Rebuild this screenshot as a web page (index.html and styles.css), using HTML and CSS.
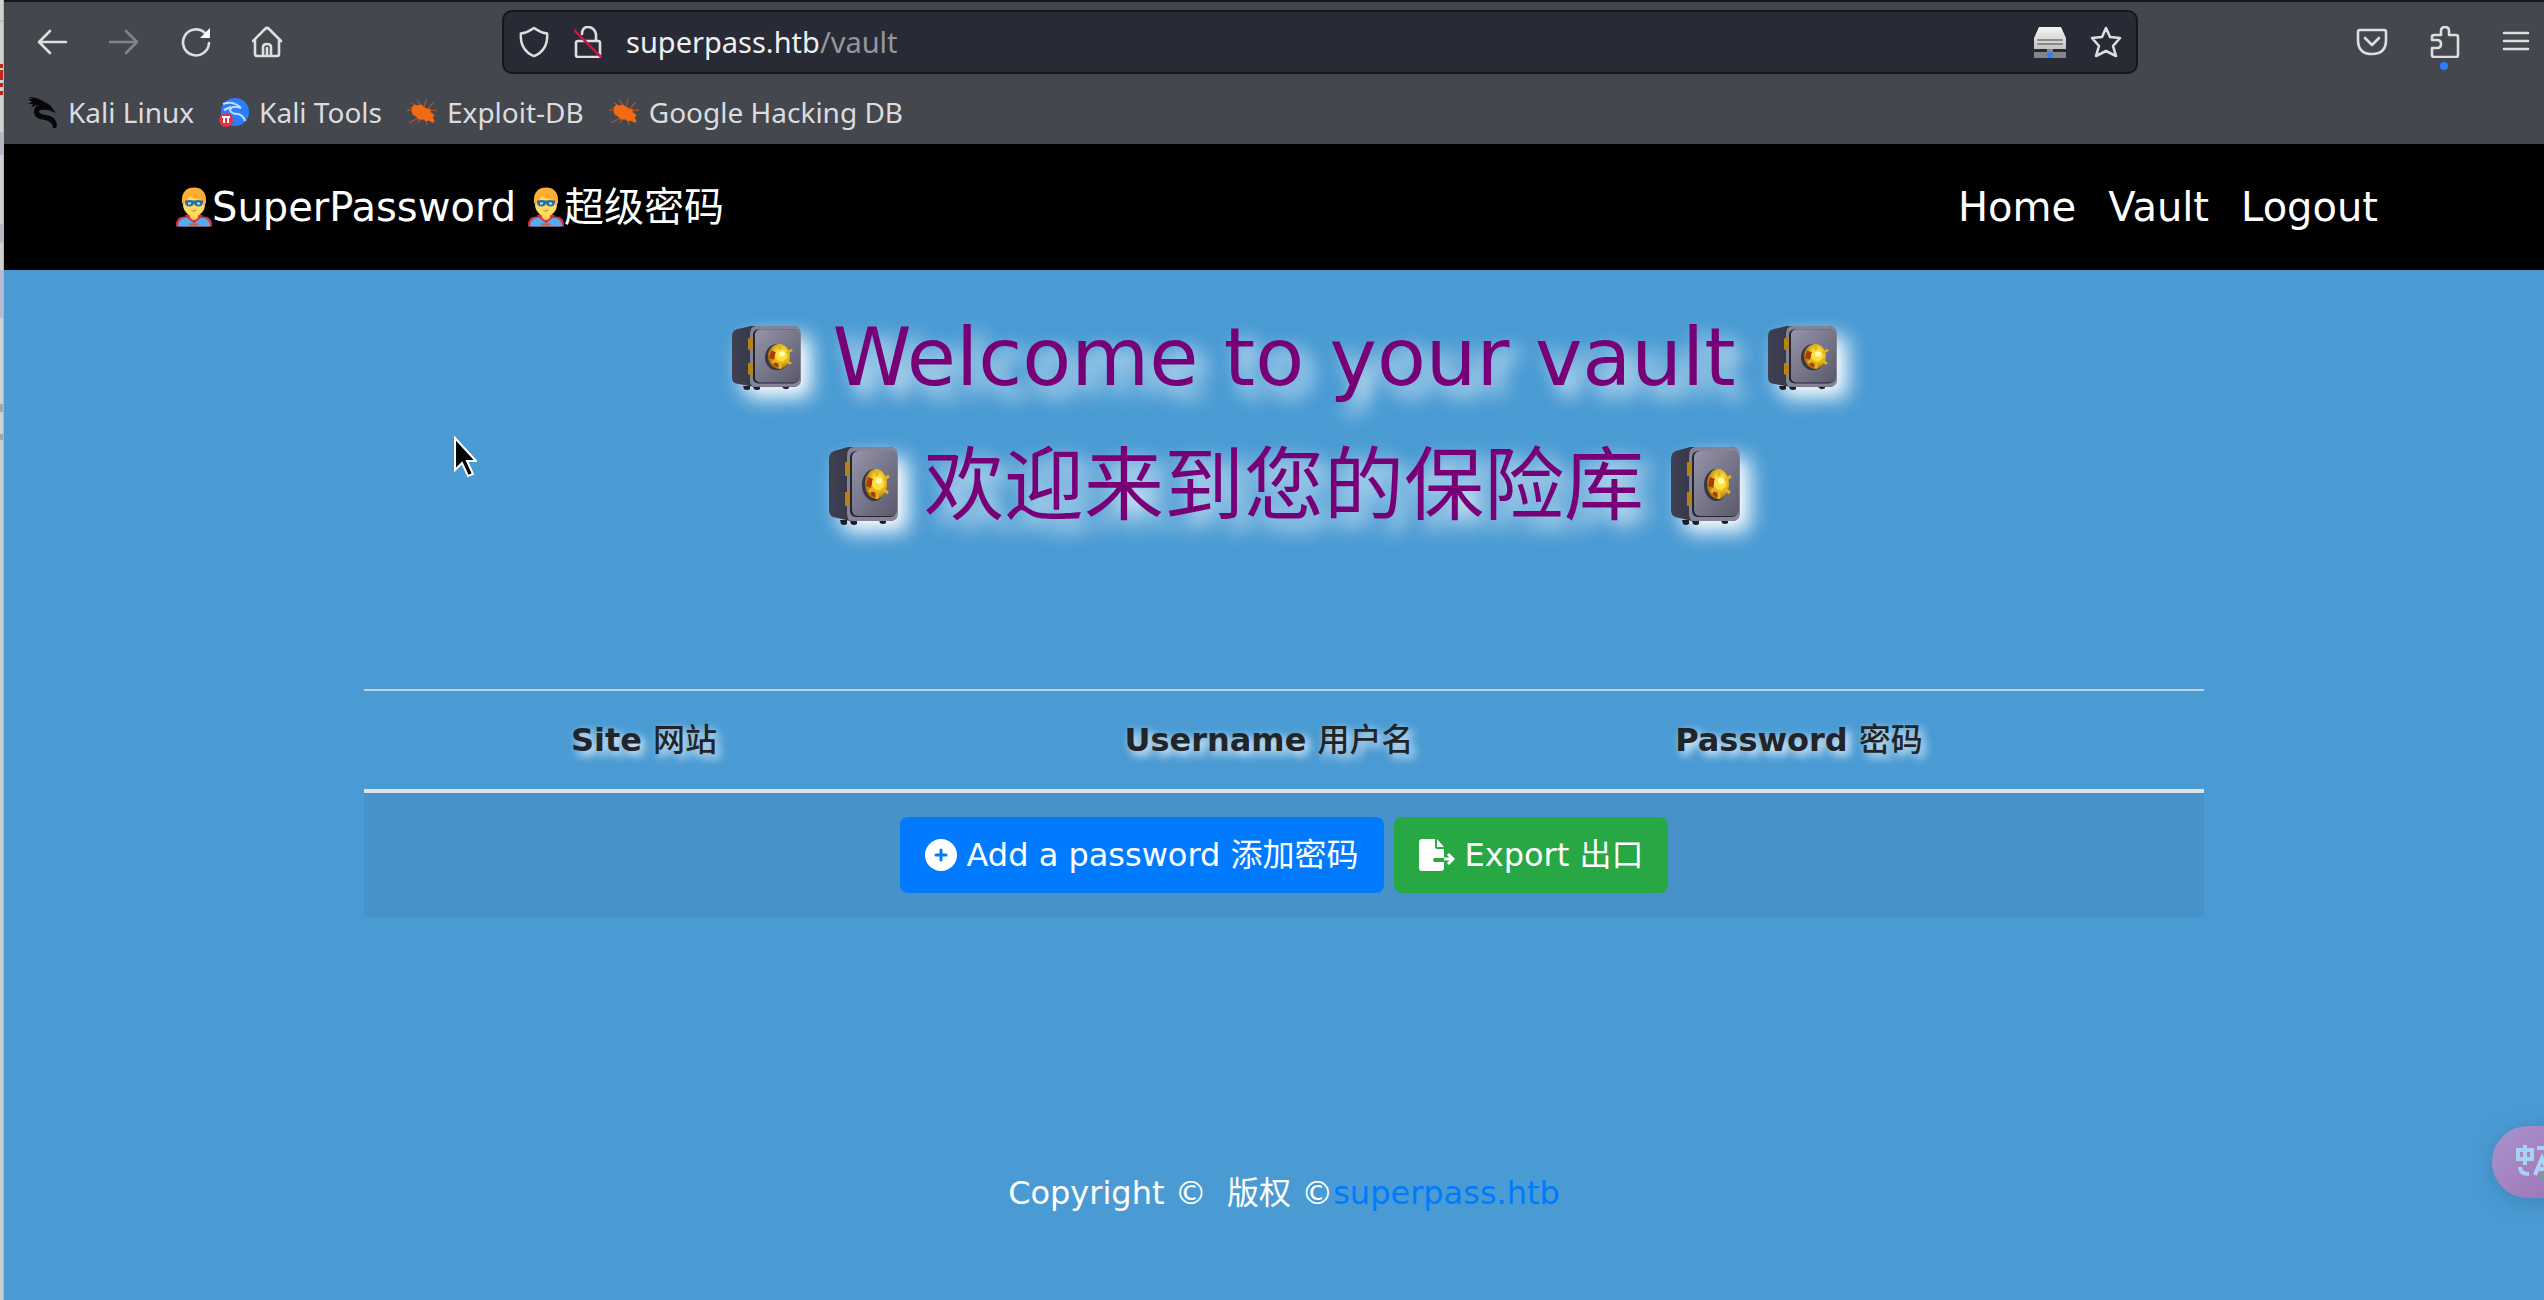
FILE: index.html
```html
<!DOCTYPE html>
<html lang="en">
<head>
<meta charset="utf-8">
<title>SuperPassword</title>
<link rel="stylesheet" href="styles.css">
</head>
<body>
<svg class="defs" aria-hidden="true">
  <defs>
    <linearGradient id="door" x1="0" y1="0" x2="1" y2="1">
      <stop offset="0" stop-color="#9594a8"/><stop offset="1" stop-color="#5a596c"/>
    </linearGradient>
    <linearGradient id="side" x1="0" y1="0" x2="1" y2="0">
      <stop offset="0" stop-color="#3f4052"/><stop offset="1" stop-color="#24242f"/>
    </linearGradient>
    <radialGradient id="gold" cx=".6" cy=".4" r=".6">
      <stop offset="0" stop-color="#fff27a"/><stop offset=".5" stop-color="#f0c52c"/><stop offset="1" stop-color="#a97405"/>
    </radialGradient>
    <linearGradient id="disk" x1="0" y1="0" x2="0" y2="1">
      <stop offset="0" stop-color="#f4f4f4"/><stop offset="1" stop-color="#c4c4c4"/>
    </linearGradient>
    <symbol id="safe" viewBox="0 0 70 78" preserveAspectRatio="none">
      <path d="M12 73h7v4q-3 2-6 0zM22 74h7v3q-3 2-6 0zM51 73h7v3q-3 2-6 0z" fill="#1e1e2a"/>
      <path d="M1 12Q1 6 6 4L20 0h42q7 1 7 8v58q0 8-7 8H22L5 70q-4-2-4-7z" fill="url(#side)"/>
      <path d="M25 0h37q8 1 8 9v57q0 8-8 8H23q-4-1-4-8V9q0-8 6-9z" fill="#858496"/>
      <rect x="22" y="4" width="46" height="66" rx="6" fill="#252530"/>
      <rect x="24" y="4" width="45" height="65" rx="6" fill="url(#door)"/>
      <path d="M17 15h5v14h-5zM17 45h5v14h-5z" fill="#b38316"/>
      <ellipse cx="46" cy="38" rx="12" ry="16" fill="#393545"/>
      <ellipse cx="48" cy="37" rx="11" ry="15" fill="url(#gold)"/>
      <path d="M40 30l5 2-2 9-5-2zM42 44l6 2 1 5-5-2z" fill="#a93c08"/>
      <path d="M49 22v30M51 36l10-7M52 40l8 6M47 40l-6 5" stroke="#e3b420" stroke-width="3"/>
      <ellipse cx="50" cy="36" rx="6" ry="7" fill="#ffe03c"/>
      <circle cx="51" cy="34" r="3" fill="#fffab5"/>
    </symbol>
    <symbol id="hero" viewBox="0 0 36 39">
      <path d="M0 38q0-9 8-9h20q8 0 8 9v1H0z" fill="#dd2e44"/>
      <path d="M2 39q0-8 8-9l8 4 8-4q8 1 8 9z" fill="#55acee"/>
      <path d="M9 28l9 8 9-8-5-2h-8z" fill="#dd2e44"/>
      <path d="M14 25h8v5q-4 5-8 0z" fill="#ffcc4d"/>
      <path d="M18 5c8 0 11 5 11 12 0 6-5 12-11 12S7 23 7 17C7 10 10 5 18 5z" fill="#ffdc5d"/>
      <path d="M6 15C5 4 11 0 18 0s13 4 12 15l-2 4q0-5-3-7-10-1-11-4-2 5-5 5-1 2-1 6z" fill="#ffac33"/>
      <path d="M9 13q5-1 9 0 4-1 9 0 1 6-5 6-3 0-4-3-1 3-4 3-6 0-5-6z" fill="#2b6f9e"/>
      <path d="M12 15h3v2h-3zM21 15h3v2h-3z" fill="#bbddf5"/>
      <path d="M15 23h6q-3 2-6 0zM13 36h10v2H13z" fill="#c1694f"/>
    </symbol>
    <symbol id="bug" viewBox="0 0 30 26">
      <path d="M5 4l7 5M10 1l5 7M19 1l-2 7M26 4l-6 6M29 11l-8 1M1 11l7 1M3 23l8-4M11 23l4-5M20 25l-2-7" stroke="#b9562a" stroke-width="1"/>
      <path d="M5 9l3-3 2 1 4-1 3 2 3 2 3 0 0 3 4 3-2 2 2 4-2 1-4-2-2 1-3-2-4 0-3-3-3-2z" fill="#f26a14"/>
    </symbol>
  </defs>
</svg>

<div class="behind" aria-hidden="true"></div>

<div class="window">
  <header class="chrome">
    <div class="toolbar">
      <div class="history">
        <button aria-label="Back"><svg class="ico" viewBox="0 0 32 32"><path d="M30 16H3M14 5L3 16l11 11"/></svg></button>
        <button aria-label="Forward" class="off"><svg class="ico" viewBox="0 0 32 32"><path d="M2 16h27M18 5l11 11-11 11"/></svg></button>
        <button aria-label="Reload"><svg class="ico" viewBox="0 0 32 32"><path d="M29 17a13 13 0 1 1-4-10"/><path d="M30 2v10H20z" fill="#fbfbfe" stroke="none"/></svg></button>
        <button aria-label="Home"><svg class="ico" viewBox="0 0 32 32"><path d="M1 15L13 3q2-2 4 0l12 12M3 13v15q0 2 2 2h20q2 0 2-2V13M11 30V21q0-3 4-3t4 3v9M15 22v8"/></svg></button>
      </div>
      <div class="url">
        <svg class="ico" viewBox="0 0 32 34"><path d="M16 2q7 5 14 6 1 18-14 24Q1 26 2 8q7-1 14-6z"/></svg>
        <svg class="ico lock" viewBox="2 1 28 32"><path d="M10 9q0-7 6-7t8 7v7M4 18q0-2 2-2h20q2 0 2 2v12q0 2-2 2H6q-2 0-2-2z"/><path d="M2 5l28 28" stroke="#d70f42"/></svg>
        <a class="address" href="#">superpass.htb<span>/vault</span></a>
        <svg class="ico" viewBox="0 0 32 32"><path d="M5 1h22l5 11v11H0V12z" fill="url(#disk)" stroke="none"/><path d="M4 14h24M4 18h24" stroke="#8b8b8b" stroke-width="2"/><path d="M0 26h32v6H0zM13 23h6v4h-6z" fill="#858585" stroke="none"/><circle cx="16" cy="29" r="3" fill="#2d7df6" stroke="none"/></svg>
        <svg class="ico" viewBox="0 0 32 32"><path d="M16 2l4 9 10 1-7 8 3 10-10-5-10 5 3-10-7-8 10-1z"/></svg>
      </div>
      <div class="tools">
        <button aria-label="Pocket"><svg class="ico" viewBox="0 0 32 32"><path d="M4 4h24q2 0 2 2v8q0 14-14 14T2 14V6q0-2 2-2zM9 12l7 7 7-7"/></svg></button>
        <button aria-label="Extensions" class="badge"><svg class="ico" viewBox="0 0 32 32"><path d="M6 31q-2 0-2-2v-7h5q4 0 4-4t-4-4H4v-3q0-2 2-2h7V5q0-4 4-4t4 4v4h7q2 0 2 2v18q0 2-2 2z"/></svg></button>
        <button aria-label="Menu"><svg class="ico" viewBox="0 0 32 32"><path d="M4 7h24M4 15h24M4 23h24"/></svg></button>
      </div>
    </div>
    <nav class="bookmarks">
      <a href="#"><svg viewBox="0 0 32 32"><path d="M1 1q8 0 13 3l9 5 6 8-8-3q-8-1-9 1 0 3 7 4 10 1 11 10l-1 3-3 0q0-6-8-8-10-1-11-7-1-5 4-8-4 0-7 3l2-4-5 0 4-2-4-3 5 0z" fill="#08080a"/></svg>Kali Linux</a>
      <a href="#"><svg viewBox="0 0 32 32"><circle cx="17" cy="16" r="14" fill="#2a7dff"/><path d="M5 8q10-4 18 4-10-3-11 2 1 4 8 4 6 2 7 7M6 14l7-3" fill="none" stroke="#c3dcff" stroke-width="2"/><circle cx="8" cy="24" r="7" fill="#e9303f"/><path d="M4 21h8M6 21v6M10 21v6" stroke="#fff" stroke-width="2"/></svg>Kali Tools</a>
      <a href="#"><svg><use href="#bug"/></svg>Exploit-DB</a>
      <a href="#"><svg><use href="#bug"/></svg>Google Hacking DB</a>
    </nav>
  </header>

  <div class="site">
    <nav class="navbar">
      <a class="brand" href="#"><svg class="hero"><use href="#hero"/></svg><span>SuperPassword</span><svg class="hero second"><use href="#hero"/></svg><span lang="zh">超级密码</span></a>
      <div class="links"><a href="#">Home</a><a href="#">Vault</a><a href="#">Logout</a></div>
    </nav>

    <main>
      <h1>
        <span class="line"><svg class="safe"><use href="#safe"/></svg>Welcome to your vault<svg class="safe"><use href="#safe"/></svg></span>
        <span class="line zh" lang="zh"><svg class="safe tall"><use href="#safe"/></svg>欢迎来到您的保险库<svg class="safe tall"><use href="#safe"/></svg></span>
      </h1>
      <table>
        <colgroup><col class="c1"><col class="c2"><col class="c3"><col class="c4"></colgroup>
        <thead><tr><th>Site <span lang="zh">网站</span></th><th>Username <span lang="zh">用户名</span></th><th>Password <span lang="zh">密码</span></th><th></th></tr></thead>
        <tbody><tr><td colspan="4"><div class="actions">
          <button class="btn add"><svg viewBox="0 0 32 32"><circle cx="16" cy="16" r="16" fill="#fff"/><path d="M16 11v10M11 16h10" stroke="#007bff" stroke-width="3" stroke-linecap="round"/></svg>Add a password 添加密码</button>
          <button class="btn export"><svg viewBox="0 0 36 32"><path d="M3 0h13v8q0 2 2 2h7v9h-9q-2 0-2 2t2 2h9v6q0 3-3 3H3q-3 0-3-3V3q0-3 3-3zM18 0l7 8h-7z" fill="#fff"/><path d="M25 20h9M29 15l5 5-5 5" fill="none" stroke="#fff" stroke-width="3"/></svg>Export 出口</button>
        </div></td></tr></tbody>
      </table>
    </main>
    <footer>Copyright © &nbsp;<span lang="zh">版权</span> ©<a href="#">superpass.htb</a></footer>
  </div>
</div>

<button class="translate" aria-label="Translate"><svg viewBox="0 0 48 36"><path d="M2 6h14v9H2zM9 1v20M21 4h12M4 23q0 7 9 7M19 31l7-17 7 17M22 25h9" fill="none" stroke="#a9d3f3" stroke-width="4"/><circle cx="34" cy="34" r="9" fill="#57b27e"/></svg></button>
<svg class="cursor" viewBox="0 0 24 42"><path d="M2 2v32l7-7 6 13 5-2-6-13h9z" fill="#000" stroke="#fff" stroke-width="2"/></svg>
</body>
</html>
```
FILE: styles.css
```css
* { box-sizing: border-box; }
body {
  margin: 0;
  min-height: 100vh;
  display: flex;
  position: relative;
  overflow: hidden;
  background: #4a9bd4;
  font-family: "DejaVu Sans", "Noto Sans CJK SC", sans-serif;
  font-size: 32px;
  line-height: 48px;
}
a { color: inherit; text-decoration: none; }
button { border: 0; padding: 0; background: none; font: inherit; color: inherit; }
svg { display: block; flex: none; }
.defs { position: absolute; width: 0; height: 0; }

/* sliver of the window behind */
.behind {
  width: 4px;
  flex: none;
  border-right: 1px solid #b5b3b3;
  background: linear-gradient(#d0d1d0 20px, #b9bab9 20px 22px, #d0d1d0 22px 64px,
    #c0281c 64px 68px, #d0d1d0 68px 70px, #c0281c 70px 80px, #d0d1d0 80px 83px, #c0281c 83px 87px,
    #d0d1d0 87px 91px, #c0281c 91px 95px, #d0d1d0 95px 132px, #b4b5c6 132px 155px,
    #d0d1d0 155px 224px, #b9bac6 224px 243px, #d0d1d0 243px 270px, #b9bad0 270px 318px,
    #d0d1d0 318px 404px, #a5a6a5 404px 412px, #d0d1d0 412px 434px, #a5a6a5 434px 440px, #cdcecd 440px);
}

.window { flex: 1; min-width: 0; display: flex; flex-direction: column; }

/* browser chrome */
.chrome {
  height: 144px;
  background: #45474e;
  border-top: 2px solid #15161b;
  color: #dcdcdf;
  font-family: "Noto Sans", sans-serif;
  font-size: 28px;
}
.toolbar { display: flex; align-items: center; padding: 8px 12px 0 32px; }
.ico { width: 32px; height: 32px; fill: none; stroke: #dededf; stroke-width: 2.6; stroke-linecap: round; stroke-linejoin: round; }
.ico.lock { width: 28px; }
.history { display: flex; gap: 40px; width: 466px; }
.off { opacity: .4; }
.url {
  flex: 1;
  height: 64px;
  display: flex;
  align-items: center;
  gap: 24px;
  padding: 0 14px;
  border: 2px solid #16171d;
  border-radius: 10px;
  background: #282a36;
}
.address { flex: 1; color: #efeff1; font-size: 29px; }
.address span { color: #96979c; }
.tools { display: flex; gap: 40px; width: 394px; justify-content: flex-end; }
.badge { position: relative; }
.badge::after {
  content: "";
  position: absolute;
  left: 12px;
  bottom: -12px;
  width: 8px;
  height: 8px;
  border-radius: 4px;
  background: #2a7dff;
}
.bookmarks { display: flex; gap: 24px; padding: 14px 24px 0 23px; }
.bookmarks a { display: flex; align-items: center; gap: 9px; }
.bookmarks svg { width: 32px; height: 32px; }

.navbar {
  display: flex;
  justify-content: space-between;
  align-items: center;
  height: 126px;
  padding: 0 150px 0 172px;
  background: #000;
  color: #fff;
  font-size: 40px;
  line-height: 60px;
}
.brand { display: flex; align-items: center; }
.hero { width: 36px; height: 40px; }
.hero.second { margin-left: 12px; }
.links a { padding: 0 16px; }

/* content is centred on a page 20px wider than the visible window */
main { padding: 28px 0 0 20px; }
h1 {
  display: grid;
  gap: 8px;
  margin: 0;
  color: #770077;
  font-size: 80px;
  font-weight: 400;
  line-height: 120px;
  text-shadow: 10px 10px 20px #fff;
}
.line { display: flex; justify-content: center; align-items: center; gap: 31px; }
.line.zh { gap: 26px; }
.safe { width: 70px; height: 64px; filter: drop-shadow(10px 10px 10px #fff); }
.safe.tall { height: 78px; }

table {
  width: 1840px;
  max-width: 100%;
  margin: 143px auto 0;
  border-collapse: collapse;
  table-layout: fixed;
  text-align: center;
}
.c1 { width: 560px; } .c2 { width: 690px; } .c3 { width: 370px; } .c4 { width: 220px; }
th {
  padding: 25px 24px;
  border-top: 2px solid #bcd3e6;
  border-bottom: 4px solid #dee2e6;
  color: #212529;
  white-space: nowrap;
  text-shadow: 4px 4px 10px #fff;
}
th span { font-weight: 500; }
td { padding: 24px; background: #4793c9; }
.actions { display: flex; justify-content: center; gap: 10px; }
.btn {
  display: flex;
  align-items: center;
  gap: 10px;
  height: 76px;
  padding: 0 25px;
  border-radius: 8px;
  color: #fff;
}
.btn svg { width: 32px; height: 32px; }
.add { background: #007bff; }
.export { background: #28a745; }
.btn.export svg { width: 36px; }

footer { padding: 252px 0 0 20px; text-align: center; color: #fff; }
footer a { color: #007bff; }

.translate {
  position: absolute;
  right: -24px;
  top: 1126px;
  width: 76px;
  height: 72px;
  border-radius: 36px 0 0 36px;
  padding: 0 0 0 24px;
  background: linear-gradient(135deg, #a894cd, #a072b4);
  box-shadow: 0 4px 20px rgba(40, 80, 130, .3);
}
.translate svg { width: 48px; height: 36px; }
.cursor { position: absolute; left: 453px; top: 436px; width: 24px; height: 42px; }
```
